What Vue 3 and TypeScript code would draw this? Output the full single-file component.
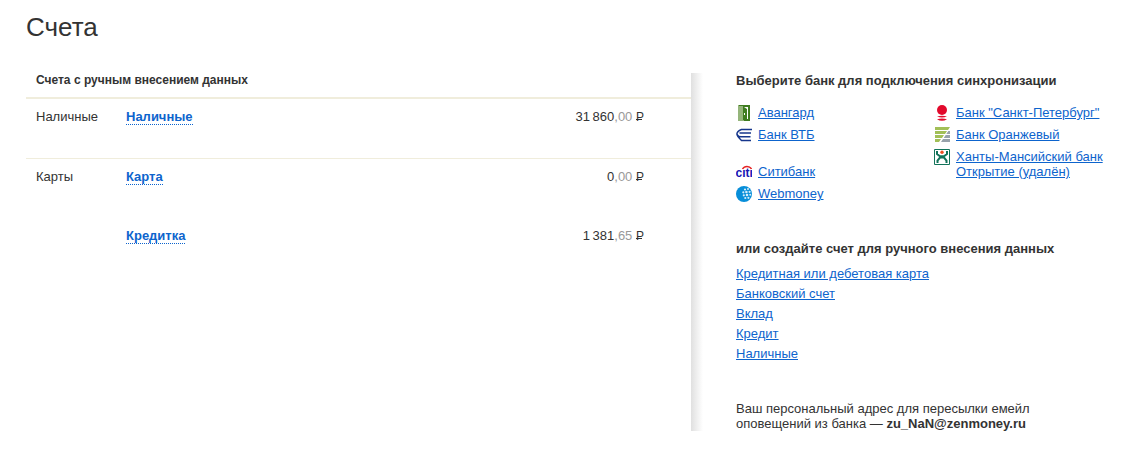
<script setup lang="ts">
interface Account {
  group: string
  name: string
  whole: string
  cents: string
  ruled: boolean
}

interface Bank {
  id: string
  name: string
}

const accounts: Account[] = [
  { group: 'Наличные', name: 'Наличные', whole: '31\u2009860', cents: ',00', ruled: false },
  { group: 'Карты', name: 'Карта', whole: '0', cents: ',00', ruled: true },
  { group: '', name: 'Кредитка', whole: '1\u2009381', cents: ',65', ruled: false },
]

const columns: Bank[][] = [
  [
    { id: 'avangard', name: 'Авангард' },
    { id: 'vtb', name: 'Банк ВТБ' },
    { id: 'citi', name: 'Ситибанк' },
    { id: 'webmoney', name: 'Webmoney' },
  ],
  [
    { id: 'spb', name: 'Банк "Санкт-Петербург"' },
    { id: 'orange', name: 'Банк Оранжевый' },
    { id: 'khanty', name: 'Ханты-Мансийский банк Открытие (удалён)' },
  ],
]

const manualKinds: string[] = [
  'Кредитная или дебетовая карта',
  'Банковский счет',
  'Вклад',
  'Кредит',
  'Наличные',
]
</script>

<template>
  <div class="page">
    <h1 class="title">Счета</h1>
    <div class="layout">
      <main class="accounts">
        <table class="table">
          <thead>
            <tr><th colspan="3" scope="colgroup">Счета с ручным внесением данных</th></tr>
          </thead>
          <tbody>
            <tr v-for="account in accounts" :key="account.name" :class="{ ruled: account.ruled }">
              <td class="group">{{ account.group }}</td>
              <td class="name"><a href="#">{{ account.name }}</a></td>
              <td class="sum">{{ account.whole }}<span class="cents">{{ account.cents }}</span> <span class="ruble">Р</span></td>
            </tr>
          </tbody>
        </table>
      </main>

      <aside class="side">
        <h2>Выберите банк для подключения синхронизации</h2>
        <div class="banks">
          <ul v-for="(column, index) in columns" :key="index" class="column">
            <li v-for="bank in column" :key="bank.id" :class="['bank', bank.id]">
              <svg class="icon" viewBox="0 0 16 16" aria-hidden="true">
                <g v-if="bank.id === 'avangard'">
                  <path fill="#95b57b" d="M2 0h6v16H2z" />
                  <path fill="#3f7d20" d="M3 0h11v16H8v-1H7V1H3z" />
                  <path fill="#fff" d="M8 2h4v12H8z" />
                  <path fill="#3f7d20" d="M8 2l3 2v10l-3 1z" />
                  <path fill="#fff" d="M8 8h1v2H8z" />
                </g>
                <g v-else-if="bank.id === 'vtb'" fill="none" stroke="#16368c" stroke-width="1.5">
                  <path d="M16 2.5H5.5C3 3.5 1 5 .9 7c0 2 1.500 3.500 4.600 6.500H15M3.500 6H15M1.200 7.500C2 9 3 9.800 5 9.800h9.500" />
                </g>
                <g v-else-if="bank.id === 'citi'">
                  <text x="-0.5" y="13" font-family="Liberation Sans, Arial, sans-serif" font-size="12" font-weight="bold" fill="#1717b5">cıtı</text>
                  <path d="M6.500 5C8.500 1.500 13.500 1.500 15.500 5" fill="none" stroke="#e52222" stroke-width="1.5" />
                </g>
                <g v-else-if="bank.id === 'webmoney'">
                  <circle cx="8" cy="8" r="8" fill="#078ed9" />
                  <g fill="#d3ecfa">
                    <circle cx="9" cy="3.500" r="1.100" /><circle cx="12" cy="3" r="1" />
                    <circle cx="7.300" cy="6.300" r="1.100" /><circle cx="10.400" cy="6" r="1.300" /><circle cx="13.600" cy="5.800" r="1.100" />
                    <circle cx="7.800" cy="9.300" r="1.100" /><circle cx="11" cy="9" r="1.300" /><circle cx="14.200" cy="8.800" r="1" />
                    <circle cx="9.300" cy="12" r="1.100" /><circle cx="12.400" cy="11.800" r="1.100" />
                  </g>
                </g>
                <g v-else-if="bank.id === 'spb'" fill="#e20a2c">
                  <circle cx="8" cy="5" r="5" />
                  <path d="M3 11.500q5-1.500 10 0q-5 2.200-10 0z" />
                  <path d="M3 14.200q5-1.200 10 0q-5 3-10 0z" />
                </g>
                <g v-else-if="bank.id === 'orange'">
                  <path fill="#a2bf57" d="M1 0h15l-2 3H1zM1 4h12l-2 3H1zM1 8h9l-2 3H1zM1 12h6l-2 3H1z" />
                  <path fill="#98a2ab" d="M14.300 4H16v3h-3.700zM11.700 8H16v3H9.700zM9 12h7v3H7z" />
                </g>
                <g v-else>
                  <path fill="#fff" stroke="#12735a" d="M.5.5h15v15H.5z" />
                  <circle cx="8" cy="3.200" r="1.700" fill="#f04e23" />
                  <path d="M3 2v3l3 2.300h4L13 5V2M3.500 14v-2.500L6 8.500h4l2.500 3V14" fill="none" stroke="#12735a" stroke-width="2" />
                </g>
              </svg>
              <a href="#">{{ bank.name }}</a>
            </li>
          </ul>
        </div>

        <h2>или создайте счет для ручного внесения данных</h2>
        <ul class="kinds">
          <li v-for="kind in manualKinds" :key="kind"><a href="#">{{ kind }}</a></li>
        </ul>

        <p class="address">
          Ваш персональный адрес для пересылки емейл оповещений из банка — <b>zu_NaN@zenmoney.ru</b>
        </p>
      </aside>
    </div>
  </div>
</template>

<style>
body {
  margin: 0;
  background: #fff;
}
</style>

<style scoped>
.page {
  padding: 12px 26px 18px;
  font: 13px/15px "Liberation Sans", Arial, sans-serif;
  color: #333;
}

.title {
  margin: 0 0 31px;
  font-size: 26px;
  line-height: 30px;
  font-weight: normal;
}

.layout {
  display: grid;
  grid-template-columns: 665fr 424fr;
}

.table {
  width: 100%;
  border-collapse: separate;
  border-spacing: 0;
}

th {
  height: 24px;
  padding: 0 10px;
  border-bottom: 2px solid #f0eddc;
  font-size: 12px;
  line-height: 14px;
  text-align: left;
  vertical-align: top;
}

td {
  height: 49px;
  padding: 10px 0 0;
  vertical-align: top;
}

.ruled td {
  border-top: 1px solid #f0eddc;
}

.group {
  width: 90px;
  padding-left: 10px;
}

.name a {
  display: inline-block;
  line-height: 15px;
  font-weight: bold;
  color: #0d64cd;
  text-decoration: none;
  border-bottom: 1px dotted #0d64cd;
}

.sum {
  padding-right: 47px;
  text-align: right;
  white-space: nowrap;
}

.cents {
  color: #999;
}

/* The bar across the stem turns the letter into the ruble sign. */
.ruble {
  font-size: 12px;
  background: linear-gradient(#333, #333) no-repeat left 0 bottom 4px / 6px 1px;
}

.side {
  padding: 0 0 0 45px;
  background: linear-gradient(to right, #e0e0e0, #fff) no-repeat left / 12px 100%;
}

h2 {
  margin: 0;
  font-size: 13px;
  line-height: 15px;
}

a {
  color: #0d64cd;
}

.banks {
  display: grid;
  grid-template-columns: 198fr 181fr;
  margin-bottom: 40px;
}

ul {
  margin: 0;
  padding: 0;
  list-style: none;
}

.column {
  display: flex;
  flex-direction: column;
  gap: 7px;
  padding-top: 17px;
}

.bank {
  display: flex;
  gap: 6px;
}

.icon {
  flex: none;
  width: 16px;
  height: 16px;
  margin-bottom: -1px;
}

.citi {
  margin-top: 15px;
}

.kinds {
  margin-top: 8px;
  line-height: 20px;
}

.address {
  max-width: 320px;
  margin: 37px 0 0;
}
</style>
